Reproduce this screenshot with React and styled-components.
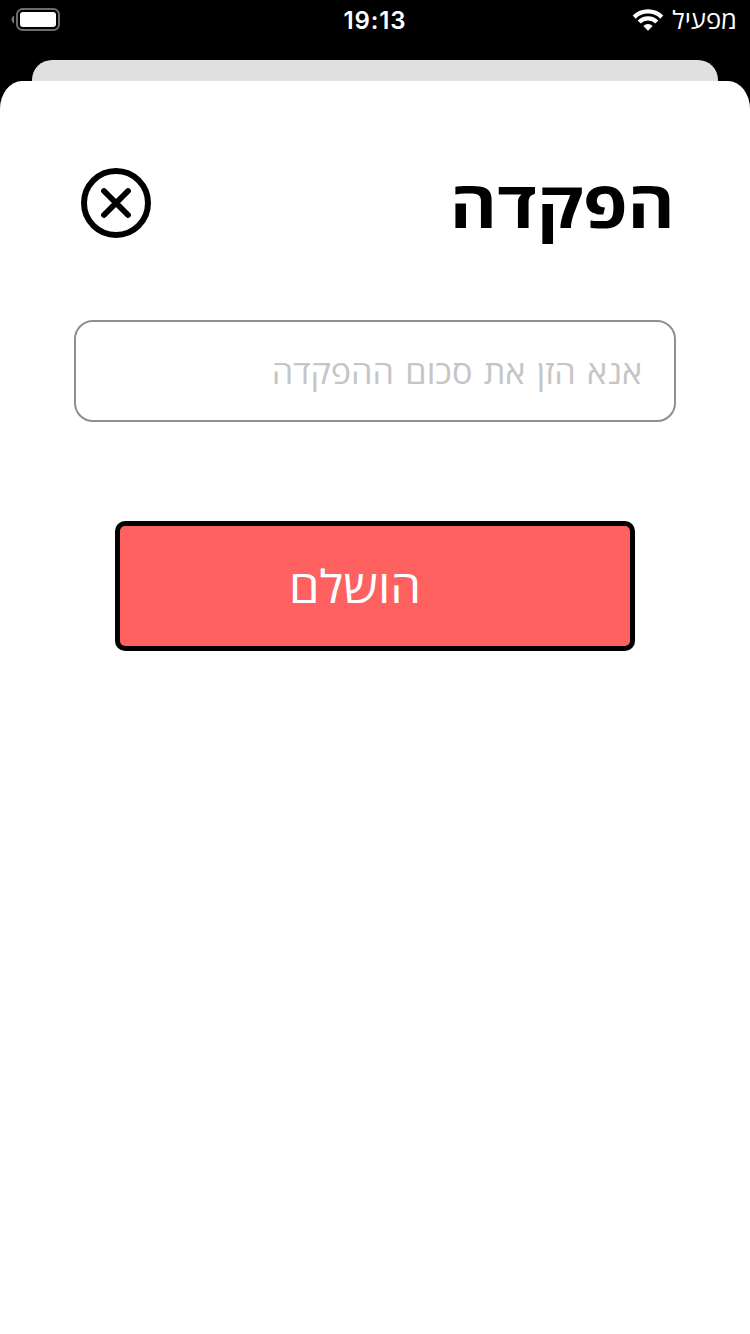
import React from "react";
import styled, { createGlobalStyle } from "styled-components";

const GlobalStyle = createGlobalStyle`
  *, *::before, *::after { box-sizing: border-box; }
  html, body { margin: 0; background: #000; }
`;

const Screen = styled.div`
  display: flex;
  flex-direction: column;
  width: 750px;
  height: 1334px;
  overflow: hidden;
  background: #000;
  font-family: "Open Sans", sans-serif;
`;

const StatusBar = styled.header`
  display: grid;
  grid-template-columns: 1fr auto 1fr;
  grid-template-rows: 40px;
  align-items: center;
  flex: none;
  height: 60px;
  padding: 0 13px 20px;
  color: #fff;
`;

const Time = styled.span`
  padding-top: 2px;
  font: 600 24px/38px Inter, sans-serif;
  letter-spacing: 0.9px;
`;

const Carrier = styled.div`
  display: flex;
  align-items: center;
  justify-content: flex-end;
  gap: 8px;
`;

const CarrierName = styled.span`
  font-size: 25.6px;
  line-height: 40px;
  direction: rtl;
  white-space: nowrap;
  transform: scaleY(0.96);
`;

const BackCard = styled.div`
  flex: none;
  height: 21px;
  margin: 0 32px;
  border-radius: 20px 20px 0 0;
  background: #e0e0e0;
`;

const Sheet = styled.main`
  display: flex;
  flex-direction: column;
  flex: 1;
  padding: 86px 74px 0;
  border-radius: 22px 22px 0 0 / 28px 28px 0 0;
  background: #fff;
`;

const TitleRow = styled.div`
  display: flex;
  justify-content: space-between;
  height: 72px;
  padding: 0 1px 0 6px;
`;

const CloseButton = styled.button`
  display: flex;
  width: 72px;
  height: 72px;
  padding: 0;
  border: 0;
  background: none;
`;

const Title = styled.h1`
  margin: 0;
  font-size: 72px;
  font-weight: 700;
  line-height: 72px;
  letter-spacing: 0.1px;
  direction: rtl;
  white-space: nowrap;
  transform: scaleY(0.9);
`;

const AmountField = styled.label`
  display: flex;
  width: 602px;
  height: 102px;
  margin-top: 81px;
  padding: 1px 32px 0;
  border: 2px solid #8e8e93;
  border-radius: 19px;
`;

const AmountInput = styled.input`
  width: 100%;
  padding: 0;
  border: 0;
  outline: none;
  background: none;
  direction: rtl;
  font: 400 34.2px "Open Sans", sans-serif;
  word-spacing: 2.4px;
  transform: scaleY(0.94);
  &::placeholder { color: #c5c5c7; opacity: 1; }
`;

const SubmitButton = styled.button`
  width: 520px;
  height: 130px;
  margin: 99px 0 0 41px;
  padding: 0 40px 0 0;
  border: 5px solid #000;
  border-radius: 10px;
  background: #ff6060;
  color: #fff;
  direction: rtl;
  text-align: center;
  font: 400 49px "Open Sans", sans-serif;
`;

const SubmitLabel = styled.span`
  display: inline-block;
  transform: scaleY(0.92);
`;

const BatterySlot = styled.div`
  display: flex;
  svg { overflow: visible; }
`;

const BatteryIcon = () => (
  <svg width="50" height="24" viewBox="3 0 50 24">
    <path d="M4 7.5C2.4 8.6 1.6 9.8 1.6 11.5S2.4 14.4 4 15.5Z" fill="#777" />
    <rect x="7" y="1" width="42" height="21" rx="5.5" fill="none" stroke="#6c6c6c" strokeWidth="2" />
    <rect x="10" y="4" width="36" height="15" rx="3" fill="#fff" />
  </svg>
);

const WifiIcon = () => (
  <svg width="32" height="24" viewBox="0 0 32 24">
    <g fill="none" stroke="#fff" strokeWidth="4.3">
      <path d="M2.2 9.1A19.6 19.6 0 0 1 29.8 9.1" />
      <path d="M7.2 14.1A12.4 12.4 0 0 1 24.8 14.1" />
    </g>
    <path d="M11.3 18A6.8 6.8 0 0 1 20.7 18L16 22.8Z" fill="#fff" />
  </svg>
);

const CloseIcon = () => (
  <svg width="72" height="72" viewBox="0 0 72 72" fill="none" stroke="#000">
    <circle cx="36" cy="36" r="32" strokeWidth="6" />
    <path d="M24 24L48 48M48 24L24 48" strokeWidth="5.8" strokeLinecap="round" />
  </svg>
);

export default function App() {
  return (
    <Screen>
      <GlobalStyle />
      <StatusBar>
        <BatterySlot><BatteryIcon /></BatterySlot>
        <Time>19:13</Time>
        <Carrier>
          <WifiIcon />
          <CarrierName>מפעיל</CarrierName>
        </Carrier>
      </StatusBar>
      <BackCard />
      <Sheet>
        <TitleRow>
          <CloseButton aria-label="סגירה"><CloseIcon /></CloseButton>
          <Title>הפקדה</Title>
        </TitleRow>
        <AmountField>
          <AmountInput placeholder="אנא הזן את סכום ההפקדה" />
        </AmountField>
        <SubmitButton><SubmitLabel>הושלם</SubmitLabel></SubmitButton>
      </Sheet>
    </Screen>
  );
}
